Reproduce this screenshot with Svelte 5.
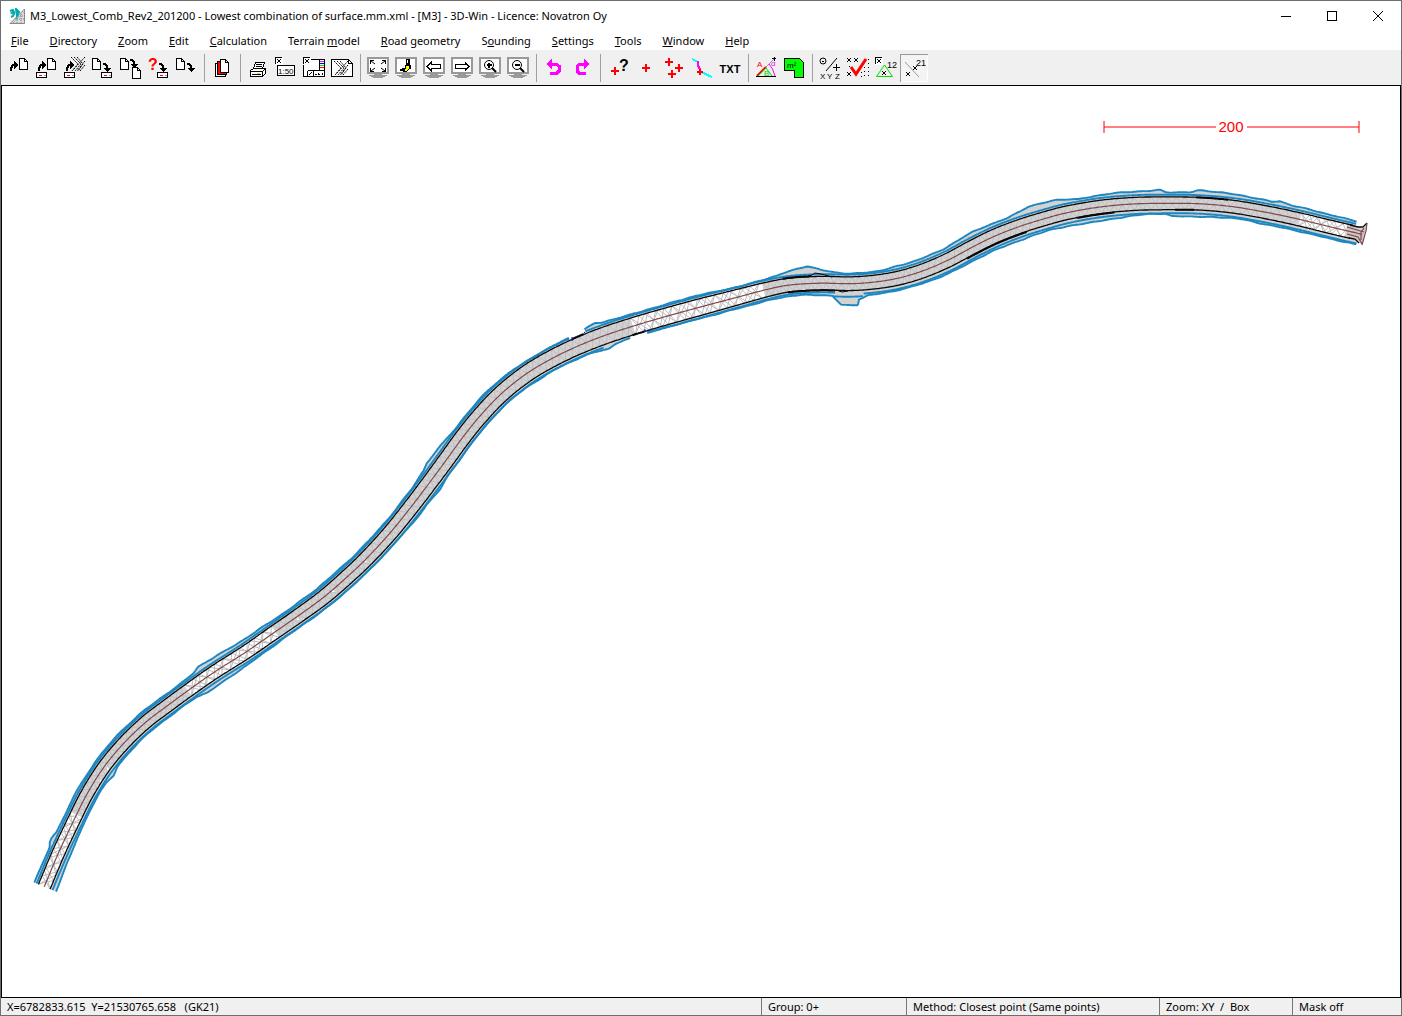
<script lang="ts">
  const menus: [string, string, string][] = [
    ['', 'F', 'ile'], ['', 'D', 'irectory'], ['', 'Z', 'oom'], ['', 'E', 'dit'],
    ['', 'C', 'alculation'], ['Terrain ', 'm', 'odel'], ['', 'R', 'oad geometry'],
    ['S', 'o', 'unding'], ['', 'S', 'ettings'], ['', 'T', 'ools'], ['', 'W', 'indow'], ['', 'H', 'elp'],
  ];

  const groups: string[][] = [
    ['Open', 'Read', 'Read vector', 'Write', 'Copy file', 'Query write', 'Save'],
    ['Files'],
    ['Print', 'Scale', 'Layout', 'Drawing'],
    ['Zoom all', 'Redraw', 'Previous view', 'Next view', 'Zoom in', 'Zoom out'],
    ['Undo', 'Redo'],
    ['Point info', 'Point', 'Points', 'Line', 'Text'],
    ['Angle', 'Area'],
    ['Coordinates', 'Check', 'Triangle', 'Numbers'],
  ];
  const screens = groups[3];

  type Pt = [number, number];

  const centre: Pt[] = [
    [44.3, 886.7], [58, 854], [73, 822], [87, 794], [104, 767], [124, 743], [146, 722], [167, 706],
    [186, 692], [213, 673], [246, 652], [272, 634], [298, 616], [324, 597], [347, 577], [367, 558],
    [390, 533], [411, 507], [430, 482], [447, 459], [463, 437], [480, 416], [501, 394], [526, 374],
    [551, 359], [578, 346], [606, 335], [640, 324], [673, 314.5], [706.7, 305.3], [740, 296.5],
    [766.7, 289.5], [790, 285], [820, 283.2], [850, 283.7], [873, 282.2], [896.7, 278.5],
    [921, 271.5], [946.7, 260.8], [973, 246.8], [995, 236], [1018, 227], [1040, 220], [1066.7, 212.8],
    [1100, 207], [1133, 204], [1166.7, 203.3], [1200, 203.8], [1233, 206.7], [1266.7, 212.4],
    [1300, 219.5], [1333, 227.5], [1363, 234.5],
  ];

  const above: Pt[] = [
    [40, 10.5], [59, 10.5], [61, 12.5], [63, 12.5], [66, 10.5], [100, 10], [190, 10], [200, 11],
    [206, 13.5], [214, 13], [235, 12], [290, 10.5], [330, 11], [400, 10.5], [420, 10.5], [433, 12],
    [438, 14], [450, 13], [465, 11], [490, 11.5], [520, 11], [527, 10], [570, 11], [586, 11],
    [590, 13], [600, 15], [606, 13], [640, 11.5], [700, 12], [715, 11], [745, 9.5], [778, 11],
    [808, 17.5], [822, 13], [835, 11], [850, 10], [880, 10.5], [900, 12], [950, 12], [980, 13.5],
    [1000, 12], [1012, 12], [1033, 16], [1060, 15], [1080, 11], [1110, 12], [1150, 12.5],
    [1160, 13.5], [1166, 11], [1190, 11], [1198, 13.5], [1230, 12.5], [1270, 11.5], [1277, 13.5],
    [1290, 12], [1400, 11],
  ];
  const below: Pt[] = [
    [40, 12.5], [60, 12], [67, 11], [90, 10], [97, 11], [103, 13], [109, 10.5], [130, 10],
    [190, 10], [200, 13], [215, 13], [250, 11], [290, 10], [390, 10], [404, 11.5], [418, 11],
    [430, 12.5], [440, 10.5], [500, 10.5], [538, 12], [550, 11], [590, 12], [604, 14], [612, 11.5],
    [640, 10], [700, 11], [765, 11], [780, 11], [800, 11], [833, 12.5], [842, 21.5], [857, 21.5],
    [858, 16], [867, 12.5], [900, 11.5], [970, 12.5], [1020, 13.5], [1045, 12], [1060, 13.5],
    [1100, 14], [1130, 12], [1148, 10.5], [1165, 10.5], [1172, 13], [1205, 13], [1240, 11],
    [1262, 12], [1400, 11],
  ];
  const halfWidth: Pt[] = [
    [44, 6.3], [190, 6.5], [300, 7], [380, 7.5], [450, 8], [600, 8.5], [700, 8.3], [790, 6.8],
    [1000, 7], [1200, 6.3], [1400, 6.8],
  ];

  function lookup(table: Pt[], x: number): number {
    if (x <= table[0][0]) return table[0][1];
    for (let i = 1; i < table.length; i++) {
      if (x <= table[i][0]) {
        const [x0, y0] = table[i - 1];
        const [x1, y1] = table[i];
        return y0 + ((y1 - y0) * (x - x0)) / (x1 - x0);
      }
    }
    return table[table.length - 1][1];
  }

  type Sample = { x: number; y: number; nx: number; ny: number };
  const samples: Sample[] = [];
  for (let i = 0; i < centre.length - 1; i++) {
    const a = centre[Math.max(0, i - 1)];
    const b = centre[i];
    const c = centre[i + 1];
    const d = centre[Math.min(centre.length - 1, i + 2)];
    const n = 24;
    for (let k = 0; k < n; k++) {
      const t = k / n;
      const f = (j: 0 | 1) =>
        0.5 * (2 * b[j] + (c[j] - a[j]) * t + (2 * a[j] - 5 * b[j] + 4 * c[j] - d[j]) * t * t +
          (3 * b[j] - a[j] - 3 * c[j] + d[j]) * t * t * t);
      const g = (j: 0 | 1) =>
        (c[j] - a[j]) + 2 * (2 * a[j] - 5 * b[j] + 4 * c[j] - d[j]) * t +
        3 * (3 * b[j] - a[j] - 3 * c[j] + d[j]) * t * t;
      const dx = g(0);
      const dy = g(1);
      const len = Math.hypot(dx, dy);
      samples.push({ x: f(0), y: f(1), nx: dy / len, ny: -dx / len });
    }
  }

  const at = (s: Sample, off: number) => `${(s.x + s.nx * off).toFixed(1)} ${(s.y + s.ny * off).toFixed(1)}`;
  const hw = (s: Sample) => lookup(halfWidth, s.x);
  const wobble = (s: Sample) => 0.2 * Math.sin(s.x * 0.31) + 0.15 * Math.sin(s.x * 0.17);
  const top = (s: Sample) => lookup(above, s.x) + wobble(s);
  const bottom = (s: Sample) => -lookup(below, s.x) - wobble(s);

  function line(off: (s: Sample) => number, from = 0, to = 1400): string {
    return samples.filter((s) => s.x >= from && s.x <= to).map((s, i) => (i ? 'L' : 'M') + at(s, off(s))).join('');
  }
  function band(hi: (s: Sample) => number, lo: (s: Sample) => number, from: number, to: number): string {
    const part = samples.filter((s) => s.x >= from && s.x <= to);
    return 'M' + part.map((s) => at(s, hi(s))).join('L') + 'L' + part.reverse().map((s) => at(s, lo(s))).join('L') + 'Z';
  }

  const body = [
    band(top, (s) => 0, 0, 574), band(top, (s) => 0, 589, 1355),
    band((s) => 0, bottom, 0, 628), band((s) => 0, bottom, 643, 1359),
    band(hw, (s) => -hw(s), 0, 1363),
  ].join('');
  const open: Pt[] = [[0, 77], [187, 276], [632, 764], [1300, 1346]];
  const openFill = open.map(([a, b]) => band(hw, (s) => -hw(s), a, b)).join('');

  function mesh(every: number, from: number, to: number): string {
    const picked: Sample[] = [];
    let travelled = every;
    let prev: Sample | null = null;
    for (const s of samples) {
      if (s.x < from || s.x > to) continue;
      if (prev) travelled += Math.hypot(s.x - prev.x, s.y - prev.y);
      prev = s;
      if (travelled >= every) {
        picked.push(s);
        travelled = 0;
      }
    }
    return [1, -1]
      .map((side) => 'M' + picked.map((s, i) => at(s, i % 2 ? 0 : side * hw(s))).join('L'))
      .join('');
  }
  const coarse = open.map(([a, b]) => mesh(4, a, b) + mesh(7, a, b)).join('');
  const flecks = mesh(3, 77, 187) + mesh(3, 276, 632) + mesh(3, 764, 1300);
  const holes: Pt[] = [[101, 781], [108, 769], [298, 619], [333, 591], [365, 561]];

  const blueTop = line(top, 0, 574) + line(top, 589, 1355);
  const blueBottom = line(bottom, 0, 628) + line(bottom, 643, 1359);
  const blueInner =
    line((s) => hw(s) + 2, 0, 574) + line((s) => hw(s) + 2.2, 589, 1355) +
    line((s) => -hw(s) - 2.6, 0, 600) + line((s) => -hw(s) - 2.4, 643, 836) +
    line((s) => -hw(s) - 3.6, 862, 1359) +
    line((s) => -13, 832, 862);
  const edges = line(hw, 0, 1352) + line((s) => -hw(s), 0, 1352);
  const thick =
    line((s) => -hw(s) - 0.6, 963, 1025) + line((s) => -hw(s) - 0.5, 1075, 1115) +
    line((s) => hw(s) + 0.4, 783, 812) + line((s) => -hw(s) - 0.3, 786, 836) +
    line((s) => hw(s) + 0.4, 575, 588) + line((s) => -hw(s), 629, 643) +
    line((s) => hw(s), 1195, 1228) + line((s) => -hw(s), 1175, 1195);
  const axis = line((s) => 0, 0, 1364);
</script>

{#snippet doc(x: number, y: number, h: number)}
  <path class="paper" d="M{x} {y}h5l3 3v{h - 3}h-8z" /><path class="ln" d="M{x + 5} {y}v3h3" />
{/snippet}

{#snippet drive(x: number)}
  <rect class="paper" {x} y="18.5" width="10" height="5" /><path stroke="#f00" d="M{x + 2} 21.5h3" />
  <path stroke="#999" d="M{x + 7} 21.5h2" />
{/snippet}

{#snippet upArrow()}
  <path class="bold" d="M7 17v-3l2-3h3" /><path d="M10 7l4 4-4 4z" />
{/snippet}

{#snippet downArrow(x: number, y: number)}
  <path class="bold" d="M{x} {y}h2l2 2v3" /><path d="M{x} {y + 4}h8l-4 4z" />
{/snippet}

{#snippet hatch(x: number, y: number)}
  <path class="ln smooth" stroke-dasharray="2 1" d="M{x} {y}l7 7-6 7M{x + 3} {y}l7 7-6 7M{x + 6} {y}l6 7-5 7M{x + 14} {y}l-12 13M{x + 14} {y + 4}l-8 10M{x + 14} {y + 8}l-5 6" />
{/snippet}

{#snippet cross(x: number, y: number)}
  <path class="ln smooth" d="M{x - 2} {y - 2}l4 4M{x + 2} {y - 2}l-4 4" />
{/snippet}

{#snippet plus(x: number, y: number)}
  <path stroke="#f00" stroke-width="2" d="M{x - 4} {y}h8M{x} {y - 4}v8" />
{/snippet}

{#snippet tag()}
  <rect x="3" y="3" width="8" height="8" fill="#fff" /><path class="ln" d="M3.5 10V3.5H10" />
  <path class="ln smooth" d="M5 5l4 4M9 5l-4 4" />
{/snippet}

{#snippet icon(name: string)}
  <svg class="ico" viewBox="0 0 28 28" aria-hidden="true">
    {#if screens.includes(name)}
      <rect x="4" y="4" width="20" height="15" fill="#fff" stroke="#999" stroke-width="2" />
      <path fill="#999" d="M3 19h22v1H3zM10 20h8v1h-8zM5 21h18v1H5zM7 22h14v1H7zM9 23h10v1H9z" />
    {/if}
    {#if name === 'Open'}
      {@render doc(15.5, 4.5, 11)}{@render upArrow()}
    {:else if name === 'Read'}
      {@render doc(15.5, 4.5, 11)}{@render upArrow()}{@render drive(4.5)}
    {:else if name === 'Read vector'}
      {@render hatch(11, 3)}{@render upArrow()}{@render drive(4.5)}
    {:else if name === 'Write'}
      {@render doc(4.5, 4.5, 11)}{@render downArrow(15, 10)}{@render drive(13.5)}
    {:else if name === 'Copy file'}
      {@render doc(4.5, 4.5, 11)}{@render downArrow(14, 6)}{@render doc(16.5, 13.5, 11)}
    {:else if name === 'Query write'}
      <text x="4" y="16" class="big" fill="#f00">?</text>{@render downArrow(15, 10)}{@render drive(13.5)}
    {:else if name === 'Save'}
      {@render doc(4.5, 4.5, 11)}{@render downArrow(15, 10)}
    {:else if name === 'Files'}
      <path fill="#fff" stroke="#000" d="M7.5 9.5h10v13h-10z" />
      <path fill="#f00" stroke="#000" d="M9.5 7.5h9v13h-9z" />
      <path class="paper" d="M12.5 5.5h5l3 3v10h-8z" /><path class="ln" d="M17.5 5.5v3h3" />
    {:else if name === 'Print'}
      <path class="paper" d="M9.5 15l2-6.5h9l-2 6.5" /><path class="ln" d="M12 10.5h6M11.5 12.5h6" />
      <path class="paper" d="M6.5 16.5l3-2h12v5l-3 3h-12z" /><path class="ln" d="M6.5 17.5h12v5M18.5 17.5l3-3" />
      <path stroke="#dd0" d="M13 19.5h3" /><path class="ln" d="M8 20.5h9" />
    {:else if name === 'Scale'}
      {@render tag()}
      <rect class="paper" x="5.5" y="11.5" width="17" height="10" /><text x="6" y="20" class="mini">1:50</text>
    {:else if name === 'Layout'}
      <path class="paper" d="M3.5 5.5h21v17h-21z" />{@render tag()}
      <path class="ln" d="M7.5 16.5h17M7.5 16.5v6M13.5 16.5v6M15 20.5h2M18 18.5v2h2M22 18.5v2M9 21l3-3M19.5 6v10" />
      <path stroke="#f0f" d="M20 7.5h4" /><path stroke="#00f" d="M20 9.5h4" />
      <path stroke="#0d0" d="M20 11.5h4" /><path stroke="#f00" d="M20 13.5h4" />
    {:else if name === 'Drawing'}
      <path class="paper" d="M3.5 5.5h17l4 4v13h-21z" /><path class="ln" d="M20.5 5.5v4h4" />
      {@render hatch(6, 7)}
    {:else if name === 'Zoom all'}
      <path class="ln" d="M6.5 10V6.5H10M18 6.5h3.5V10M6.5 14v3.5H10M18 17.5h3.5V14" />
      <path class="ln smooth" d="M7 7l4 3M21 7l-4 3M7 17l4-3M21 17l-4-3" />
    {:else if name === 'Redraw'}
      <path fill="#000" d="M14 5h4v6h-4z" /><path fill="#fff" d="M15 6h1v3h-1z" />
      <path fill="#000" d="M7 16l7-3v4H8z" />
      <path fill="#ff0" stroke="#000" d="M13.5 11.5h4v3l-3 3h-3l2-3z" /><path class="bold" d="M18 11v4" />
    {:else if name === 'Previous view'}
      <path class="ln" d="M7 12.5l4-4v2h9.5v4H11v2z" />
    {:else if name === 'Next view'}
      <path class="ln" d="M21 12.5l-4-4v2H7.5v4H17v2z" />
    {:else if name === 'Zoom in' || name === 'Zoom out'}
      <circle cx="13" cy="11" r="4.5" class="ln smooth" /><path class="bold smooth" d="M16 14l4 4" />
      <path class="bold" d="M10.5 11h5" />
      {#if name === 'Zoom in'}<path class="bold" d="M13 8.5v5" />{/if}
    {:else if name === 'Undo'}
      <path fill="none" stroke="#f0f" stroke-width="3" d="M9 10h7l3 2v5l-2 2h-7" />
      <path fill="#f0f" d="M6 10l6-5v10z" />
    {:else if name === 'Redo'}
      <path fill="none" stroke="#f0f" stroke-width="3" d="M19 10h-7l-3 2v5l2 2h7" />
      <path fill="#f0f" d="M22 10l-6-5v10z" />
    {:else if name === 'Point info'}
      {@render plus(11, 17)}<text x="15" y="17" class="big">?</text>
    {:else if name === 'Point'}
      {@render plus(14, 14)}
    {:else if name === 'Points'}
      {@render plus(9, 8)}{@render plus(19, 14)}{@render plus(12, 20)}
    {:else if name === 'Line'}
      <path class="cyan" d="M4 5l6 3" /><path fill="none" stroke="#f0f" stroke-width="2" d="M10 7v5l2 3" />
      <path class="cyan" d="M13 18l11 5" />
      <path stroke="#f00" stroke-width="2" d="M9 18h6M12 15v6" />
    {:else if name === 'Text'}
      <text x="14" y="19" class="txt">TXT</text>
    {:else if name === 'Angle'}
      <path class="smooth" stroke="#999" d="M5 22L22 5" /><path class="smooth" stroke="#f00" d="M5 22l9-9" stroke-width="2" />
      <path class="ln" d="M4 22.5h20M20 4.5h4M22.5 3v4" /><path class="smooth" fill="none" stroke="#0d0" d="M6 22l8-8 6 8" />
      <path class="smooth" fill="none" stroke="#f0f" d="M17 10q4 4 6 12" />
      <text x="5" y="13" class="mini" fill="#f00">A</text><text x="12" y="22" class="mini" fill="#0c0">B</text>
      <text x="19" y="12" class="mini" fill="#f0f">α</text>
    {:else if name === 'Area'}
      <path fill="#0f0" stroke="#000" d="M4.5 4.5h15l4 4v15h-9v-7h-10z" /><text x="7" y="14" class="mini">m²</text>
    {:else if name === 'Coordinates'}
      <circle cx="7" cy="7" r="3" class="ln smooth" /><path class="ln smooth" d="M10 17L21 4" />
      <path class="ln" d="M6 7.5h2M17 13.5h7M20.5 10v7" />
      <text x="4" y="25" class="mini">X</text><text x="11" y="25" class="mini">Y</text><text x="19" y="25" class="mini">Z</text>
    {:else if name === 'Check'}
      {@render cross(5, 6)}{@render cross(12, 6)}{@render cross(5, 20)}
      <path class="ln" stroke-dasharray="1 3" d="M24.5 5v18M20.5 13v10M17.5 18v6M5.5 12v4" />
      <path class="smooth" fill="none" stroke="#f00" stroke-width="3" d="M7 13l5 7L22 5" />
    {:else if name === 'Triangle'}
      {@render tag()}<path class="smooth" fill="none" stroke="#0d0" d="M12.5 11l-8 11.5h16z" />{@render cross(12, 19)}
      <text x="15" y="14" class="num">12</text>
    {:else if name === 'Numbers'}
      <path class="smooth" stroke="#999" d="M5 8l14 15" />{@render cross(8, 20)}{@render cross(15, 14)}
      <text x="16" y="12" class="num">21</text>
    {/if}
  </svg>
{/snippet}

<div class="window">
  <header class="title">
    <svg class="logo" viewBox="0 0 16 16" aria-hidden="true">
      <path fill="#ddd" stroke="#888" d="M15.5 1v14.5H1z" />
      <path stroke="#888" stroke-dasharray="1 1" d="M4 15L15 4M8 15V9M12 15V5M6 11h9M9 8h6" />
      <path fill="none" stroke="#0aa" stroke-width="2" d="M1 3l3-1 1 2-2 1 2 1-1 2-2 1M7 1l3 3-2 4z" />
    </svg>
    <h1>M3_Lowest_Comb_Rev2_201200 - Lowest combination of surface.mm.xml - [M3] - 3D-Win - Licence: Novatron Oy</h1>
    <div class="controls">
      <button aria-label="Minimize"><svg viewBox="0 0 12 12"><path class="ln" d="M1 6.5h10" /></svg></button>
      <button aria-label="Maximize"><svg viewBox="0 0 12 12"><path class="ln" d="M1.5 1.5h9v9h-9z" /></svg></button>
      <button aria-label="Close"><svg viewBox="0 0 12 12" class="smooth"><path class="ln" d="M1 1l10 10M11 1L1 11" /></svg></button>
    </div>
  </header>

  <nav class="menu">
    {#each menus as [pre, key, post]}
      <button>{pre}<u>{key}</u>{post}</button>
    {/each}
  </nav>

  <div class="toolbar" role="toolbar" aria-label="Tools">
    {#each groups as group}
      <div class="group">
        {#each group as name}
          <button class="tool" class:pressed={name === 'Numbers'} aria-label={name}>{@render icon(name)}</button>
        {/each}
      </div>
    {/each}
  </div>

  <main class="canvas">
    <svg viewBox="2 86 1398 911" role="img" aria-label="Road surface plan">
      <g fill="none">
        <path d={body} fill="#d2d2d2" />
        <path d={flecks} stroke="#bfbfc3" stroke-width="1" />
        <path d={openFill} fill="#fff" />
        <path d={coarse} stroke="#bdbdbd" stroke-width="1" />
        {#each holes as [x, y]}
          <path d="M{x - 1} {y - 2}l3 3h-3z" fill="#fff" />
        {/each}
        <path d="M1347 223L1362 231L1367 224L1362 244L1347 237Z" fill="#cdc6c4" />
        <path d={blueInner} class="blue" />
        <path d={blueTop} class="blue" />
        <path d={blueBottom} class="blue" />
        <path d={edges} stroke="#080808" stroke-width="1.3" />
        <path d={thick} stroke="#080808" stroke-width="2" />
        <path d="M808 276l4-1 3-2 6 1 11 3M836 290l6 2 6-1" stroke="#080808" />
        <path d={axis} stroke="#7d484c" stroke-width="1.2" />
        <path d="M1350 225l8 2 5 0 4-4M1349 238l6 1 4 4" stroke="#080808" stroke-width="1.3" />
        <path d="M1367 223l-1 8-4 14M1364 228l-3 4 0 8M1347 227l17 5M1347 234l11 3 4 7" stroke="#7d484c" stroke-width="1.2" />
        <path d="M572 337v4M584 332l2 2M645 329v3" stroke="#11d" stroke-width="1" />
      </g>
      <g class="scale">
        <path d="M1104 121v12M1359 121v12M1104 127h112M1247 127h112" />
        <text x="1231" y="132">200</text>
      </g>
    </svg>
  </main>

  <footer class="status">
    <span class="coords">X=6782833.615&nbsp; Y=21530765.658&nbsp;&nbsp; (GK21)</span>
    <span class="grp">Group: 0+</span>
    <span class="method">Method: Closest point (Same points)</span>
    <span class="zoom">Zoom: XY&nbsp; /&nbsp; Box</span>
    <span class="mask">Mask off</span>
  </footer>
</div>

<style>
  :global(body) { margin: 0; background: #fff; }
  .window {
    box-sizing: border-box; min-height: 100vh; display: flex; flex-direction: column;
    border: 1px solid #6e6e6e; background: #fff; color: #000;
    font-family: "Noto Sans", "Open Sans", sans-serif; font-size: 11px; line-height: 18px;
  }
  button { font: inherit; color: inherit; background: none; border: 0; padding: 0; margin: 0; }
  .title { display: flex; align-items: center; height: 29px; padding-left: 8px; }
  .logo { width: 16px; height: 16px; margin-right: 5px; }
  h1 { flex: 1; margin: 0; font-size: 11px; font-weight: 400; white-space: nowrap; overflow: hidden; }
  .controls { display: flex; }
  .controls button { width: 46px; height: 29px; display: grid; place-items: center; }
  .controls svg { width: 12px; height: 12px; shape-rendering: crispEdges; }
  .controls svg.smooth { shape-rendering: auto; }
  .menu { display: flex; height: 20px; gap: 21px; padding-left: 10px; align-items: flex-end; }
  .menu button { white-space: nowrap; }
  .toolbar { display: flex; background: #f0f0f0; padding: 4px 3px 3px; }
  .group { display: flex; }
  .group + .group { margin-left: 4px; border-left: 1px solid #a0a0a0; padding-left: 3px; }
  .tool { box-sizing: border-box; width: 28px; height: 28px; }
  .pressed { background: #f4f4f4; box-shadow: inset 1px 1px #999, inset -1px -1px #fff; }
  .ico { display: block; width: 28px; height: 28px; shape-rendering: crispEdges; }
  .ico .smooth { shape-rendering: auto; }
  .paper { fill: #fff; stroke: #000; }
  .ln { fill: none; stroke: #000; }
  .bold { fill: none; stroke: #000; stroke-width: 2; }
  .cyan { fill: none; stroke: #0ff; stroke-width: 2; }
  .ico text { font-family: "Liberation Sans", sans-serif; }
  .ico .big { font-size: 16px; font-weight: 700; }
  .ico .mini { font-size: 8px; }
  .ico .num { font-size: 9px; }
  .ico .txt { font-size: 11px; font-weight: 700; text-anchor: middle; }
  .canvas { flex: 1; display: flex; border: 1px solid #000; background: #fff; }
  .canvas svg { display: block; width: 100%; height: auto; }
  .blue { stroke: #1c86c2; stroke-width: 1.9; }
  .scale path { stroke: #f00; stroke-width: 1; fill: none; }
  .scale text { fill: #f00; font: 15px "Liberation Sans", sans-serif; text-anchor: middle; }
  .status { display: flex; height: 17px; background: #f0f0f0; white-space: nowrap; }
  .status span { box-sizing: border-box; border-left: 1px solid #777; padding-left: 6px; }
  .status .coords { flex: 1; border-left: 0; }
  .status .grp { width: 145px; }
  .status .method { width: 253px; }
  .status .zoom { width: 133px; }
  .status .mask { width: 109px; }
</style>
